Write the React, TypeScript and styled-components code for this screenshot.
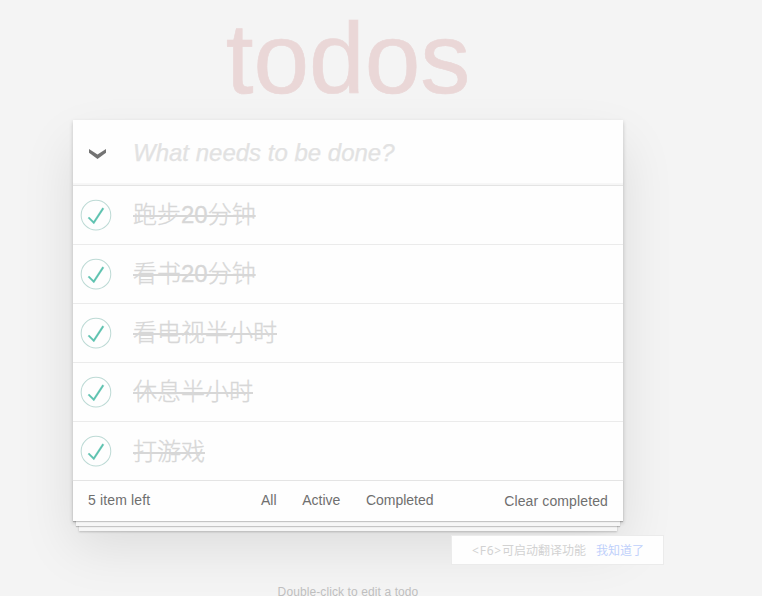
import React from "react";
import styled, { createGlobalStyle } from "styled-components";

const GlobalStyle = createGlobalStyle`
  * { box-sizing: border-box; }
  html, body { margin: 0; padding: 0; background: #f4f4f4; overflow: hidden; }
  body { font-family: "Liberation Sans", "Noto Sans CJK SC", sans-serif; font-size: 14px; color: #6f6f6f; }
`;

const Page = styled.div`
  position: relative;
  width: 762px;
  height: 596px;
  overflow: hidden;
  background: #f4f4f4;
`;

const Title = styled.h1`
  margin: 0 0 0 73px;
  width: 550px;
  height: 120px;
  font-size: 100px;
  line-height: 116px;
  font-weight: 400;
  text-align: center;
  color: #ead7d7;
  -webkit-text-stroke: 0.6px #ead7d7;
`;

const Card = styled.section`
  width: 550px;
  margin-left: 73px;
  background: #fefefe;
  box-shadow: 0 2px 4px rgba(0, 0, 0, 0.2), 0 25px 50px rgba(0, 0, 0, 0.1);
`;

const Entry = styled.div`
  display: flex;
  align-items: center;
  height: 65px;
  padding-left: 16px;
  box-shadow: inset 0 -2px 1px rgba(0, 0, 0, 0.03);
`;

const Chevron = styled.svg`
  width: 18px;
  height: 11px;
  margin-top: 3px;
`;

const Placeholder = styled.span`
  margin-left: 26px;
  font-size: 24px;
  font-style: italic;
  line-height: 28px;
  color: #e2e2e2;
  -webkit-text-stroke: 0.25px #e2e2e2;
`;

const List = styled.ul`
  margin: 0;
  padding: 0;
  list-style: none;
  border-top: 1px solid #e4e4e4;
`;

const Item = styled.li`
  display: flex;
  align-items: center;
  height: 59px;
  padding-bottom: 1px;
  border-bottom: 1px solid #ebebeb;
  &:last-child { height: 58px; padding-bottom: 0; border-bottom: 0; }
`;

const Check = styled.svg`
  width: 40px;
  height: 40px;
`;

const Label = styled.span`
  margin-left: 20px;
  font-size: 24px;
  font-weight: 300;
  line-height: 29px;
  color: #d7d7d7;
  -webkit-text-stroke: 0.3px #d7d7d7;
  text-decoration: line-through;
  text-decoration-thickness: 2px;
`;

const Footer = styled.footer`
  display: flex;
  height: 41px;
  padding: 9px 15px 0;
  line-height: 20px;
  border-top: 1px solid #e4e4e4;
  box-shadow: 0 1px 1px rgba(0, 0, 0, 0.2), 0 8px 0 -3px #f6f6f6,
    0 9px 1px -3px rgba(0, 0, 0, 0.2), 0 16px 0 -6px #f6f6f6,
    0 17px 2px -6px rgba(0, 0, 0, 0.2);
`;

const Count = styled.span`
  width: 173px;
  letter-spacing: 0.15px;
`;

const Filters = styled.nav`
  display: flex;
  gap: 25.6px;
`;

const Clear = styled.span`
  margin: 1px 0 0 auto;
  letter-spacing: 0.12px;
`;

const Info = styled.p`
  width: 550px;
  margin: 64px 0 0 73px;
  font-size: 12px;
  line-height: 14px;
  letter-spacing: 0.1px;
  text-align: center;
  color: #bfbfbf;
`;

const Hint = styled.aside`
  position: absolute;
  left: 451px;
  top: 535px;
  display: flex;
  width: 213px;
  height: 30px;
  padding-left: 20px;
  border: 1px solid #ebebeb;
  background: #fefefe;
  font-family: "Noto Sans", "Noto Sans CJK SC", sans-serif;
  font-size: 12px;
  line-height: 29px;
  white-space: nowrap;
  color: #d2d2d2;
`;

const Key = styled.span`
  width: 30px;
  letter-spacing: 0.8px;
`;

const Dismiss = styled.span`
  margin-left: 10px;
  color: #bfd0fb;
`;

const todos = ["跑步20分钟", "看书20分钟", "看电视半小时", "休息半小时", "打游戏"];

export default function App() {
  return (
    <>
      <GlobalStyle />
      <Page>
        <Title>todos</Title>
        <Card>
          <Entry>
            <Chevron viewBox="0 0 18 11">
              <path d="M0 0L8.5 5.6 17 0V3.8L8.5 10 0 3.8z" fill="#737373" />
            </Chevron>
            <Placeholder>What needs to be done?</Placeholder>
          </Entry>
          <List>
            {todos.map((text) => (
              <Item key={text}>
                <Check viewBox="-10 -18 100 135">
                  <circle cx="50" cy="50" r="50" fill="none" stroke="#bddad5" strokeWidth="3.4" />
                  <path fill="#5dc2af" stroke="#5dc2af" strokeWidth="1" d="M72 25L42 71 27 56l-4 4 20 20 34-52z" />
                </Check>
                <Label>{text}</Label>
              </Item>
            ))}
          </List>
          <Footer>
            <Count>5 item left</Count>
            <Filters>
              <span>All</span>
              <span>Active</span>
              <span>Completed</span>
            </Filters>
            <Clear>Clear completed</Clear>
          </Footer>
        </Card>
        <Info>Double-click to edit a todo</Info>
        <Hint>
          <Key>&lt;F6&gt;</Key>
          <span>可启动翻译功能</span>
          <Dismiss>我知道了</Dismiss>
        </Hint>
      </Page>
    </>
  );
}
